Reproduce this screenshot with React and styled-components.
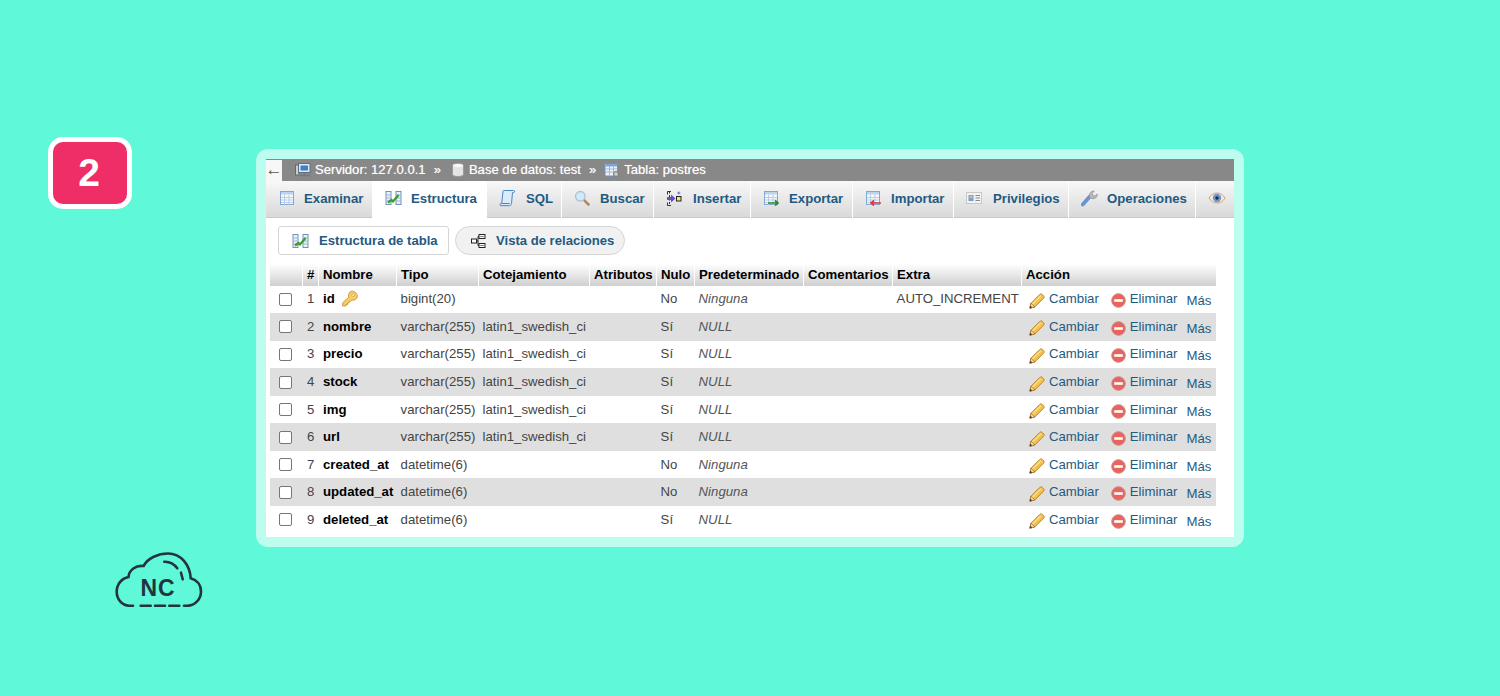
import React from 'react'
import styled, { createGlobalStyle } from 'styled-components'

const GlobalStyle = createGlobalStyle`
  html, body {
    margin: 0;
    padding: 0;
    background: #5ff8d9;
  }
  * {
    box-sizing: border-box;
  }
`

const Page = styled.div`
  display: flex;
  width: 1500px;
  height: 696px;
  overflow: hidden;
  background: #5ff8d9;
  font-family: "Liberation Sans", Arial, sans-serif;
`

const LeftColumn = styled.div`
  width: 256px;
  padding: 137px 0 0 48px;
`

const Badge = styled.div`
  display: flex;
  align-items: center;
  justify-content: center;
  width: 84px;
  height: 72px;
  padding-right: 2px;
  border: 5px solid #fff;
  border-radius: 15px;
  background: #ef2e68;
  color: #fff;
  font-size: 39px;
  font-weight: 700;
`

const Logo = styled.svg`
  display: block;
  margin: 343px 0 0 66px;
`

const Card = styled.div`
  width: 988px;
  height: 398px;
  margin-top: 149px;
  padding: 10px;
  border-radius: 12px;
  background: #bdfdf0;
`

const Panel = styled.div`
  height: 378px;
  background: #fff;
`

const TopBar = styled.div`
  display: flex;
  align-items: center;
  height: 22px;
  padding-bottom: 1px;
  background: #888;
  color: #fff;
  font-size: 13.1px;
  text-shadow: 0 0 1px rgba(255, 255, 255, .6);
`

const BackArrow = styled.div`
  display: flex;
  align-items: center;
  justify-content: center;
  width: 16px;
  height: 21px;
  margin: 1px 13px 0 0;
  background: #f7f7f7;
  color: #555;
  font-size: 17px;
  text-shadow: none;
`

const Crumb = styled.span`
  display: flex;
  align-items: center;
  gap: ${p => p.$gap || 4}px;
  white-space: nowrap;
`

const CrumbSep = styled.span`
  margin: 0 ${p => p.$right}px 0 8px;
  font-size: 13px;
`

const Tabs = styled.div`
  display: flex;
  gap: 1px;
  height: 37px;
`

const Tab = styled.div`
  display: flex;
  align-items: center;
  gap: ${p => p.$gap || 9}px;
  flex: 0 0 ${p => p.$w}px;
  padding: 0 0 2px ${p => p.$pad || 12}px;
  background: ${p => p.$active ? '#fff' : 'linear-gradient(#f8f8f8, #d9d9d9)'};
  border-bottom: 1px solid ${p => p.$active ? '#fff' : '#c9c9c9'};
  color: #235a81;
  font-size: 13.2px;
  font-weight: 700;
  white-space: nowrap;
`

const SubBar = styled.div`
  display: flex;
  gap: 6px;
  padding: 8px 0 0 12px;
  height: 46px;
`

const SubButton = styled.div`
  display: flex;
  align-items: center;
  gap: 10px;
  width: ${p => p.$w}px;
  height: 29px;
  padding-left: ${p => p.$round ? 14 : 13}px;
  border: 1px solid #d5d5d5;
  border-radius: ${p => p.$round ? '15px' : '3px'};
  background: ${p => p.$round ? '#f1f1f1' : '#fff'};
  color: #235a81;
  font-size: 13.1px;
  font-weight: 700;
  white-space: nowrap;
`

const TableWrap = styled.div`
  padding-left: 4px;
`

const Table = styled.table`
  width: 946px;
  table-layout: fixed;
  border-collapse: collapse;
  font-size: 13.2px;
`

const Col = styled.col`
  width: ${p => p.$w}px;
`

const HeadCell = styled.th`
  height: 21.6px;
  padding: 0 0 1px 4px;
  background: linear-gradient(#fff, #cfcfcf);
  box-shadow: inset -1px 0 0 #fff;
  color: #000;
  font-weight: 700;
  text-align: left;
  white-space: nowrap;

  &:last-child {
    box-shadow: none;
  }
`

const Row = styled.tr`
  background: ${p => p.$even ? '#dfdfdf' : '#fff'};
`

const Cell = styled.td`
  height: 27.56px;
  padding: 0 0 1px 3.6px;
  color: #444;
  white-space: nowrap;
  overflow: visible;
`

const NumCell = styled(Cell)`
  padding-left: 4px;
`

const NameCell = styled(Cell)`
  color: #000;
  font-weight: 700;
  padding-left: 4px;
`

const NullCell = styled(Cell)`
  font-style: italic;
  color: #555;
`

const NameInner = styled.span`
  display: inline-flex;
  align-items: center;
  gap: 6px;
`

const Check = styled.input`
  display: block;
  width: 13px;
  height: 13px;
  margin: 1px 0 0 5px;
  appearance: none;
  border: 1px solid #767676;
  border-radius: 2px;
  background: #fff;
`

const Actions = styled.div`
  display: flex;
  align-items: center;
  padding-left: 3.4px;
  color: #235a81;
`

const Action = styled.span`
  display: flex;
  align-items: center;
  gap: 4px;
  margin-right: ${p => p.$mr}px;

  svg {
    margin-top: 4px;
  }
`

const More = styled.span`
  padding-top: 2px;
  margin-top: 2px;
`

const GridIcon = ({ accent }) => (
  <svg width="16" height="16" viewBox="0 0 16 16">
    <rect x="1.5" y="1.5" width="13" height="13" fill="#f5f8fc" stroke="#82a8d4" />
    <rect x="2" y="2" width="12" height="2.5" fill="#bdd3ec" />
    <path d="M2 7.500h12M2 10h12M2 12.500h12M5.500 4.500v10M10 4.500v10" stroke="#b9cee6" strokeWidth="1" />
    {accent === 'green' && <path d="M5 13h10m-3-2.500 3 2.500-3 2.500" stroke="#2f8a2f" strokeWidth="1.700" fill="none" />}
    {accent === 'red' && <path d="M16 13H6m3-2.500L6 13l3 2.500" stroke="#e0383c" strokeWidth="1.700" fill="none" />}
  </svg>
)

const StructureIcon = () => (
  <svg width="17" height="16" viewBox="0 0 17 16">
    <rect x="1" y="1.500" width="5" height="13" fill="#e9f0f8" stroke="#6f93b8" />
    <rect x="11" y="1.500" width="5" height="13" fill="#e9f0f8" stroke="#6f93b8" />
    <path d="M1 5h5M1 8h5M1 11h5M11 5h5M11 8h5M11 11h5" stroke="#9cb7d3" />
    <path d="M3 12.500 6.500 10 8 11.500 13.500 5" stroke="#3c9a2e" strokeWidth="2.200" fill="none" />
  </svg>
)

const SqlIcon = () => (
  <svg width="17" height="18" viewBox="0 0 17 18">
    <path d="M4 2.500c0-.7.5-1 1.200-1h9.300c1 0 1.500.7 1 1.500-.3.500-.8.700-1.500.700h-.5L12.500 14.500c-.2 1.500-1 2.200-2 2.200H2c-1 0-1.500-.7-1-1.500.3-.5.8-.7 1.700-.7z" fill="#dcebfa" stroke="#4a86c6" />
    <path d="M2.700 14.500h8" fill="none" stroke="#4a86c6" />
  </svg>
)

const SearchIcon = () => (
  <svg width="16" height="16" viewBox="0 0 16 16">
    <path d="m9.800 9.800 4.700 4.700" stroke="#b5894b" strokeWidth="2.500" strokeLinecap="round" />
    <circle cx="6.300" cy="6.300" r="4.800" fill="#d6e8f8" stroke="#aac3d9" strokeWidth="1.400" />
  </svg>
)

const InsertIcon = () => (
  <svg width="16" height="17" viewBox="0 0 16 17">
    <path d="M5 1.500H1.500v3M1.500 12.500v3H5" stroke="#333" fill="none" />
    <path d="M3.500 1.500v14" stroke="#333" strokeDasharray="2 1.500" />
    <path d="M1 7h4V4.500l4.500 4-4.500 4V10H1z" fill="#6a4fc0" />
    <rect x="10.500" y="6.500" width="4.500" height="4.500" fill="#f5e27a" stroke="#222" />
    <path d="M12.800 1.500v3M11.300 3h3" stroke="#5a6fd0" />
  </svg>
)

const CardIcon = () => (
  <svg width="16" height="14" viewBox="0 0 16 14">
    <rect x=".5" y="1.500" width="15" height="11" fill="#f2f2f2" stroke="#c8c8c8" />
    <rect x="2.500" y="4" width="5" height="6" fill="#6f9fd8" />
    <circle cx="5" cy="6" r="1.500" fill="#eab676" />
    <path d="M9.500 4.500h4.500M9.500 7h4.500M9.500 9.500h4.500" stroke="#8a8a8a" />
  </svg>
)

const WrenchIcon = () => (
  <svg width="17" height="17" viewBox="0 0 17 17">
    <path d="m1.800 14.500 7-8" stroke="#6b93cf" strokeWidth="3.800" strokeLinecap="round" />
    <path d="M8.500 6.500C7.800 3.500 10 .8 13.200 1l-2 2.500.7 2 2 .6L16.200 4c.5 3.200-2.500 5.500-5.500 4.500L9 8z" fill="#b9b9b9" stroke="#8f8f8f" strokeWidth=".7" />
  </svg>
)

const EyeIcon = () => (
  <svg width="18" height="14" viewBox="0 0 18 14">
    <path d="M1 7c2-3.500 5-5 8-5s6 1.500 8 5c-2 3.500-5 5-8 5S3 10.500 1 7z" fill="#f7ead9" stroke="#c9a57f" />
    <circle cx="9" cy="7" r="4.200" fill="#6f97cf" />
    <circle cx="9" cy="7" r="1.700" fill="#1c2b4a" />
  </svg>
)

const RelationIcon = () => (
  <svg width="16" height="16" viewBox="0 0 16 16">
    <rect x="9" y="1.500" width="6" height="4" fill="#fff" stroke="#222" />
    <rect x="9" y="10.500" width="6" height="4" fill="#fff" stroke="#222" />
    <rect x="1.500" y="6" width="5" height="4" fill="#fff" stroke="#222" />
    <path d="M6.500 8H8M8 3.500v9M8 3.500h1M8 12.500h1" stroke="#222" fill="none" />
    <path d="M10 3.500h4M10 12.500h4" stroke="#888" />
  </svg>
)

const ServerIcon = () => (
  <svg width="16" height="15" viewBox="0 0 16 15">
    <rect x=".5" y="3" width="3.500" height="10" fill="#ccc" stroke="#666" />
    <rect x="3.500" y="1.500" width="11.500" height="9" fill="#dfe7ef" stroke="#58708a" />
    <rect x="5.500" y="3.500" width="7.500" height="5" fill="#3f7fc4" />
    <path d="M5 13.500h10" stroke="#777" strokeWidth="1.500" />
    <path d="M9.500 10.500v3" stroke="#777" strokeWidth="1.500" />
  </svg>
)

const DbIcon = () => (
  <svg width="12" height="14" viewBox="0 0 12 14">
    <path d="M.5 2.500C.5 1.300 3 .5 6 .5s5.500.8 5.500 2v9c0 1.200-2.500 2-5.500 2s-5.500-.8-5.500-2z" fill="#e4e4e4" stroke="#9a9a9a" />
    <ellipse cx="6" cy="2.500" rx="5" ry="1.700" fill="#f7f7f7" />
  </svg>
)

const SmallTableIcon = () => (
  <svg width="16" height="16" viewBox="0 0 16 16">
    <rect x="1" y="1.500" width="12.500" height="12.500" fill="#eef3fa" stroke="#6e8fc0" />
    <rect x="1.500" y="2" width="11.500" height="2.500" fill="#7ea4d8" />
    <path d="M1.500 7h12M1.500 10h12M5.500 4.500v9M9.500 4.500v9" stroke="#9fb6d6" />
    <circle cx="12" cy="12" r="2.500" fill="#c9c9c9" stroke="#777" />
  </svg>
)

const KeyIcon = () => (
  <svg width="18" height="18" viewBox="0 0 18 18">
    <path d="M10.500 1.200c3-.5 6.300 2.600 5.800 5.700-.4 2.300-3 3.800-5.400 3.200L9.500 11.500H8V13H6.500v1.500H5V16H1.700v-3.200l6-5.600C7 4.400 8.200 1.600 10.500 1.200z" fill="#f6cd62" stroke="#d29b3c" />
    <circle cx="12.300" cy="5" r="1.500" fill="#fff3c9" stroke="#d29b3c" strokeWidth=".7" />
  </svg>
)

const PencilIcon = () => (
  <svg width="16" height="16" viewBox="0 0 16 16">
    <path d="M.8 15.200 2 10.200 10.800 1.400c.8-.7 1.800-.7 2.500 0l1.300 1.300c.7.700.7 1.700 0 2.500L5.800 14z" fill="#f4c04c" stroke="#b07f28" strokeWidth=".9" />
    <path d="M.8 15.200 2 10.200 5.800 14z" fill="#f1d9b0" stroke="#8a5a22" strokeWidth=".6" />
    <path d="M.8 15.200l.6-2.400 1.800 1.800z" fill="#4a3015" />
    <path d="M3.500 11 12 2.700" stroke="#fbe08e" strokeWidth="1.200" />
  </svg>
)

const DeleteIcon = () => (
  <svg width="15" height="15" viewBox="0 0 15 15">
    <circle cx="7.500" cy="7.500" r="6.800" fill="#e8645c" stroke="#cf8a84" />
    <rect x="3.200" y="6.200" width="8.600" height="2.600" fill="#fff" />
  </svg>
)

const LogoMark = () => (
  <Logo width="90" height="56" viewBox="0 0 90 56" fill="none" stroke="#22343c" strokeWidth="2.600" strokeLinecap="round">
    <path d="M19 53.700h-4C8 53.700 2.700 47 2.700 39.700 2.700 32 8 26 14.500 25c.5-7 7.500-12 15-11C34 6 44 1.500 54 1.500c13 0 22 11.500 22.700 24.800C83 28 87 33 87 39.700c0 7.300-6 14-13.500 14H70" />
    <path d="M26.700 53.700h10M41 53.700h10M55.300 53.700h10" />
    <path d="M50.300 9.700c5-.2 10 2.400 13 6.600M67 20.700l1.700 6.600" />
    <text x="44" y="43.700" textAnchor="middle" fill="#22343c" stroke="none" fontFamily="'Liberation Sans', Arial, sans-serif" fontSize="23" fontWeight="700" letterSpacing="1">NC</text>
  </Logo>
)

const columnas = [33, 16, 78, 82, 111, 67, 38, 109, 89, 129, 194]

const encabezados = ['', '#', 'Nombre', 'Tipo', 'Cotejamiento', 'Atributos', 'Nulo', 'Predeterminado', 'Comentarios', 'Extra', 'Acción']

const filas = [
  { n: 1, nombre: 'id', tipo: 'bigint(20)', cotejamiento: '', nulo: 'No', defecto: 'Ninguna', extra: 'AUTO_INCREMENT', key: true },
  { n: 2, nombre: 'nombre', tipo: 'varchar(255)', cotejamiento: 'latin1_swedish_ci', nulo: 'Sí', defecto: 'NULL' },
  { n: 3, nombre: 'precio', tipo: 'varchar(255)', cotejamiento: 'latin1_swedish_ci', nulo: 'Sí', defecto: 'NULL' },
  { n: 4, nombre: 'stock', tipo: 'varchar(255)', cotejamiento: 'latin1_swedish_ci', nulo: 'Sí', defecto: 'NULL' },
  { n: 5, nombre: 'img', tipo: 'varchar(255)', cotejamiento: 'latin1_swedish_ci', nulo: 'Sí', defecto: 'NULL' },
  { n: 6, nombre: 'url', tipo: 'varchar(255)', cotejamiento: 'latin1_swedish_ci', nulo: 'Sí', defecto: 'NULL' },
  { n: 7, nombre: 'created_at', tipo: 'datetime(6)', cotejamiento: '', nulo: 'No', defecto: 'Ninguna' },
  { n: 8, nombre: 'updated_at', tipo: 'datetime(6)', cotejamiento: '', nulo: 'No', defecto: 'Ninguna' },
  { n: 9, nombre: 'deleted_at', tipo: 'datetime(6)', cotejamiento: '', nulo: 'Sí', defecto: 'NULL' },
]

export default function App () {
  return (
    <Page>
      <GlobalStyle />
      <LeftColumn>
        <Badge>2</Badge>
        <LogoMark />
      </LeftColumn>
      <Card>
        <Panel>
          <TopBar>
            <BackArrow>←</BackArrow>
            <Crumb><ServerIcon />Servidor: 127.0.0.1</Crumb>
            <CrumbSep $right={11}>»</CrumbSep>
            <Crumb $gap={5}><DbIcon />Base de datos: test</Crumb>
            <CrumbSep $right={8}>»</CrumbSep>
            <Crumb><SmallTableIcon />Tabla: postres</Crumb>
          </TopBar>
          <Tabs>
            <Tab $w={106} $pad={13}><GridIcon />Examinar</Tab>
            <Tab $w={113} $active><StructureIcon />Estructura</Tab>
            <Tab $w={74} $gap={10}><SqlIcon />SQL</Tab>
            <Tab $w={91} $gap={10}><SearchIcon />Buscar</Tab>
            <Tab $w={96} $gap={11}><InsertIcon />Insertar</Tab>
            <Tab $w={101} $gap={10}><GridIcon accent="green" />Exportar</Tab>
            <Tab $w={100} $gap={10}><GridIcon accent="red" />Importar</Tab>
            <Tab $w={114} $gap={11}><CardIcon />Privilegios</Tab>
            <Tab $w={126}><WrenchIcon />Operaciones</Tab>
            <Tab $w={38}><EyeIcon /></Tab>
          </Tabs>
          <SubBar>
            <SubButton $w={171}><StructureIcon />Estructura de tabla</SubButton>
            <SubButton $w={170} $round><RelationIcon />Vista de relaciones</SubButton>
          </SubBar>
          <TableWrap>
            <Table>
              <colgroup>
                {columnas.map((w, i) => <Col key={i} $w={w} />)}
              </colgroup>
              <thead>
                <tr>
                  {encabezados.map((titulo, i) => <HeadCell key={i}>{titulo}</HeadCell>)}
                </tr>
              </thead>
              <tbody>
                {filas.map(fila => (
                  <Row key={fila.n} $even={fila.n % 2 === 0}>
                    <Cell><Check type="checkbox" /></Cell>
                    <NumCell>{fila.n}</NumCell>
                    <NameCell><NameInner>{fila.nombre}{fila.key && <KeyIcon />}</NameInner></NameCell>
                    <Cell>{fila.tipo}</Cell>
                    <Cell>{fila.cotejamiento}</Cell>
                    <Cell />
                    <Cell>{fila.nulo}</Cell>
                    <NullCell>{fila.defecto}</NullCell>
                    <Cell />
                    <Cell>{fila.extra}</Cell>
                    <Cell>
                      <Actions>
                        <Action $mr={12}><PencilIcon />Cambiar</Action>
                        <Action $mr={9}><DeleteIcon />Eliminar</Action>
                        <More>Más</More>
                      </Actions>
                    </Cell>
                  </Row>
                ))}
              </tbody>
            </Table>
          </TableWrap>
        </Panel>
      </Card>
    </Page>
  )
}
